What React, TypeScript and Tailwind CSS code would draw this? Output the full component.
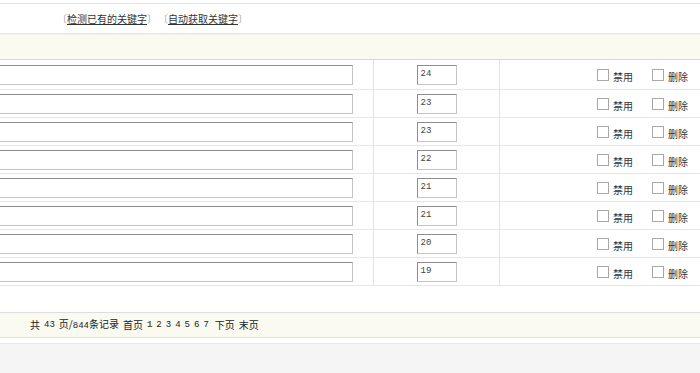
import React from 'react';

const ranks = [24, 23, 23, 22, 21, 21, 20, 19];
const mono = { fontFamily: '"Liberation Mono", monospace' };

function Box() {
  return <span className="inline-block w-[12px] h-[12px] border border-[#a8a8a8] bg-white" />;
}

function BracketLink({ label }: { label: string }) {
  return (
    <span className="text-[#aaa] whitespace-nowrap flex items-center">
      <span className="ml-[-5px]">〔</span>
      <a className="underline text-[#333]">{label}</a>
      <span className="mr-[-5px]">〕</span>
    </span>
  );
}

export default function App() {
  return (
    <div className="w-[700px] h-[373px] bg-[#f5f5f5] overflow-hidden text-[10px] text-[#333]" style={{ fontFamily: '"Noto Sans CJK SC", "Liberation Sans", sans-serif' }}>
      <div className="bg-white pt-[3px]">
        {/* toolbar */}
        <div className="h-[31px] border-t border-[#e3e3e3] border-b border-b-[#e8e8e8] flex items-center pl-[62px] gap-[11px] leading-none">
          <BracketLink label="检测已有的关键字" />
          <BracketLink label="自动获取关键字" />
        </div>
        {/* header band */}
        <div className="h-[26px] bg-[#fafaf0] border-t border-[#f0f0e4] border-b border-b-[#d8d8d8]" />
        {/* rows */}
        {ranks.map((r, i) => (
          <div key={i} className={`flex border-b border-[#e6e6e6] ${i === 0 ? 'h-[30px]' : 'h-[28px]'}`}>
            <div className="w-[374px] flex items-center justify-end pr-[20px] overflow-hidden border-r border-[#e2e2e2]">
              <div className="shrink-0 w-[420px] h-[20px] border border-[#c4c4c4] border-t-[#8e8e8e] border-l-[#8e8e8e] bg-white" />
            </div>
            <div className="w-[126px] flex items-center justify-center border-r border-[#e2e2e2]">
              <div className="w-[40px] h-[20px] border border-[#c4c4c4] border-t-[#8e8e8e] border-l-[#8e8e8e] bg-white flex items-center pl-[3px] text-[9px] text-[#444]" style={mono}>
                {r}
              </div>
            </div>
            <div className="flex-1 flex items-center justify-end pr-[12px] gap-[4px] leading-none">
              <Box />
              <span className="mr-[15px] mt-[4px] w-[20px]">禁用</span>
              <Box />
              <span className="mt-[4px] w-[20px]">删除</span>
            </div>
          </div>
        ))}
        <div className="h-[26px]" />
        {/* pagination */}
        <div className="h-[26px] bg-[#fafaf0] border-t border-[#dedede] border-b border-b-[#e2e2e2] flex items-center pl-[30px] gap-[4px] leading-none text-[#222]">
          <span>共</span>
          <span className="text-[9px]" style={mono}>43</span>
          <span>页/<span className="text-[9px]" style={mono}>844</span>条记录</span>
          <span>首页</span>
          <span className="text-[9px] font-bold text-[#5a5a1e]" style={mono}>1</span>
          {[2, 3, 4, 5, 6, 7].map((n) => (
            <span key={n} className="text-[9px]" style={mono}>{n}</span>
          ))}
          <span className="ml-[2px]">下页</span>
          <span>末页</span>
        </div>
        <div className="h-[6px] border-b border-[#e6e6e6]" />
      </div>
    </div>
  );
}
